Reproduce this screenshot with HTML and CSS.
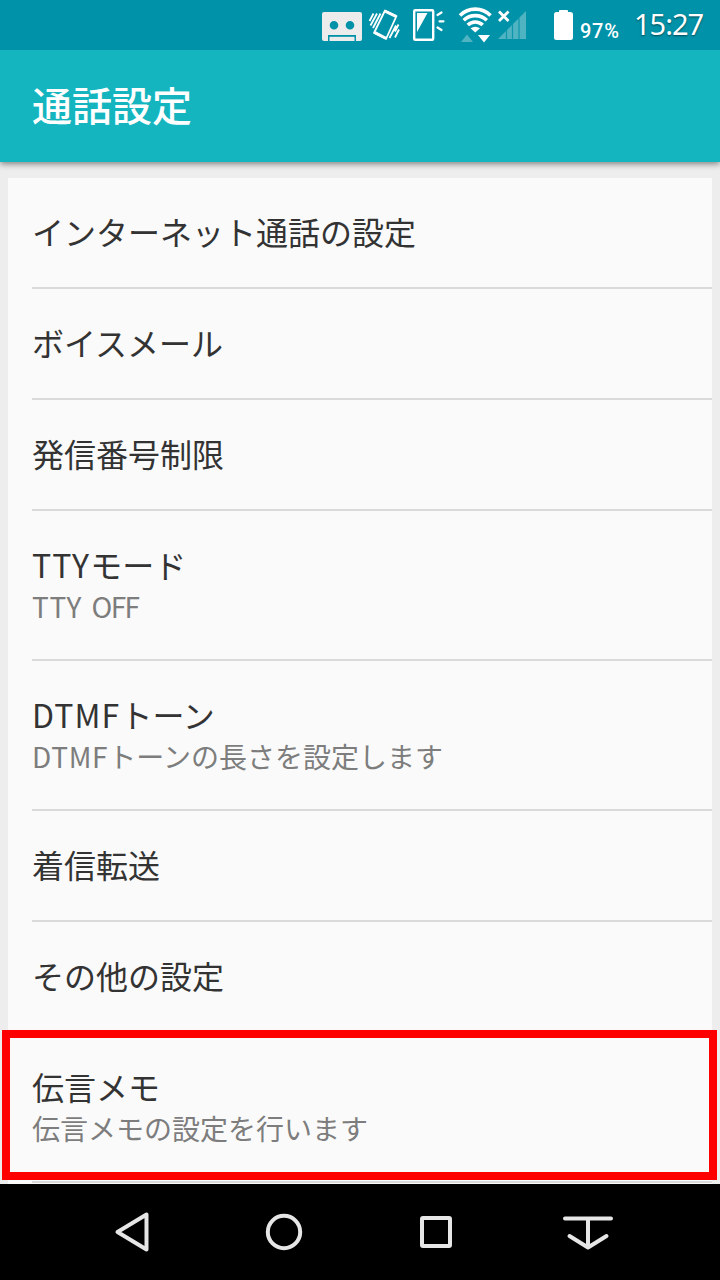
FILE: index.html
```html
<!DOCTYPE html>
<html lang="ja">
<head>
  <meta charset="UTF-8" />
  <meta name="viewport" content="width=device-width, initial-scale=1.0"/>
  <title>通話設定</title>
  <link rel="stylesheet" href="styles.css">
</head>
<body>
  <div class="status-bar">
    <svg class="status-icons" width="274" height="50" viewBox="310 0 274 50">
      <!-- answering memo -->
      <path fill="#ececec" fill-rule="evenodd" d="M324 12h36a2 2 0 0 1 2 2v25a2 2 0 0 1-2 2h-4v-6h-28v6h-4a2 2 0 0 1-2-2V14a2 2 0 0 1 2-2zM334 21a4.300 4.300 0 1 0 0 8.600a4.300 4.300 0 1 0 0-8.600zM350 21a4.300 4.300 0 1 0 0 8.600a4.300 4.300 0 1 0 0-8.600z"/>
      <path fill="#ececec" d="M329.500 36.800h25V41h-25z"/>
      <!-- vibrate -->
      <g fill="none" stroke="#fff">
        <path stroke-width="1.800" stroke-linejoin="round" d="M385 10.500L396.500 16 386 39 374 33z"/>
        <path stroke-width="2.600" d="M385.500 11.500l10.500 5M375 32.500l11 5.600"/>
        <path stroke-width="1.800" d="M373.500 13.500l-4 7.500M377 13.500l-6.500 12M380.500 13.500L373 28M398.500 24.500l-3.500 7M396 25.500l-6.500 12.500M399 29.500l-4 8"/>
      </g>
      <!-- screen light -->
      <g fill="none" stroke="#fff">
        <rect x="414.200" y="10.200" width="19" height="29.500" rx="1" stroke-width="2.400"/>
        <path stroke-width="2.200" stroke-linecap="round" d="M437.500 15l4-2.500M439.500 21.300h4M437.500 27.500l4 2.500"/>
        <path fill="#fff" stroke="none" d="M417 13h10.500L417 32z"/>
      </g>
      <!-- wifi -->
      <g fill="none" stroke="#fff" stroke-width="3.600">
        <path d="M460 15.500a21.500 21.500 0 0 1 30.500 0"/>
        <path d="M463.700 20.300a16.500 16.500 0 0 1 23.100 0"/>
        <path d="M467.800 25a10.600 10.600 0 0 1 14.900 0"/>
      </g>
      <path fill="#fff" d="M470.500 28.300q4.750-3 9.500 0l-4.750 4.300z"/>
      <path fill="#4fb3c2" d="M461 42l6-7.500 6 7.500z"/>
      <path fill="#fff" d="M478 35h12l-6 7.500z"/>
      <!-- signal -->
      <path fill="#4fb3c2" d="M498 39l28-28v28z"/>
      <path stroke="#0e96ab" stroke-width="1.200" d="M506.500 30v9M512.500 24v15M519 18v21"/>
      <path stroke="#fff" stroke-width="2.800" d="M499 11.500l9.500 9.500M508.500 11.500L499 21"/>
      <!-- battery -->
      <path fill="#fff" d="M559 12v-1q0-1 1-1h7q1 0 1 1v1h2.500q2.500 0 2.500 2.500v23q0 2.500-2.500 2.500h-14q-2.500 0-2.500-2.500v-23q0-2.500 2.500-2.500z"/>
    </svg>
    <span class="battery">97%</span>
    <span class="clock">15:27</span>
  </div>
  <div class="header">通話設定</div>
  <div class="main">
    <ul class="list">
      <li><div class="title">インターネット通話の設定</div></li>
      <li><div class="title">ボイスメール</div></li>
      <li><div class="title">発信番号制限</div></li>
      <li class="double">
        <div class="title"><span class="latin">TTY</span>モード</div>
        <div class="details"><span class="latin">TTY</span> <span class="value">OFF</span></div>
      </li>
      <li class="double">
        <div class="title"><span class="latin">DTMF</span>トーン</div>
        <div class="details"><span class="latin">DTMF</span>トーンの長さを設定します</div>
      </li>
      <li><div class="title">着信転送</div></li>
      <li><div class="title">その他の設定</div></li>
      <li class="double">
        <div class="title">伝言メモ</div>
        <div class="details">伝言メモの設定を行います</div>
        <div class="highlight"></div>
      </li>
    </ul>
  </div>
  <div class="nav">
    <svg viewBox="0 0 60 60"><path d="M44.500 12.500v35L15.500 30z"/></svg>
    <svg viewBox="0 0 60 60"><circle cx="30" cy="30" r="16.200"/></svg>
    <svg viewBox="0 0 60 60"><rect x="16" y="16" width="28" height="28" rx="1"/></svg>
    <svg viewBox="0 0 60 60"><path d="M7 16.500h46M30 17v28M11.500 34L30 45.500 48.500 34"/></svg>
  </div>
</body>
</html>
```

FILE: styles.css
```css
* { box-sizing: border-box; }
body {
  margin: 0;
  font-family: 'Noto Sans CJK JP', sans-serif;
  display: flex;
  flex-direction: column;
  height: 1280px;
  overflow: hidden;
  background: #ededed;
}

.status-bar {
  height: 50px;
  flex-shrink: 0;
  background: #0092a8;
  color: white;
  display: flex;
  align-items: center;
  justify-content: flex-end;
  padding-right: 16px;
}

.status-icons {
  margin-right: -4px;
}

.battery {
  width: 40px;
  font: 500 20px/50px Roboto, sans-serif;
  letter-spacing: 0.7px;
  padding-top: 12px;
  height: 62px;
}

.clock {
  width: 70px;
  margin-left: 14px;
  padding-bottom: 2px;
  font: 29px/48px 'Noto Sans', sans-serif;
  letter-spacing: -1px;
  text-shadow: 0 1px 2px rgba(0, 0, 0, 0.5);
}

.header {
  height: 112px;
  flex-shrink: 0;
  padding-left: 32px;
  font-size: 40px;
  font-weight: 500;
  line-height: 108px;
  color: white;
  background: #15b5c0;
  box-shadow: 0 2px 6px rgba(0, 0, 0, 0.45);
  clip-path: inset(0 0 -12px 0);
  z-index: 1;
}

.main {
  height: 1022px;
  flex-shrink: 0;
  padding: 16px 8px 0;
  overflow: hidden;
}

.list {
  list-style: none;
  margin: 0;
  padding: 0 0 0 24px;
  height: 1006px;
  background: #fafafa;
}

.list li {
  height: 111px;
  padding-bottom: 4px;
  border-bottom: 2px solid #dadada;
  display: flex;
  flex-direction: column;
  justify-content: center;
  position: relative;
}

.list li.double {
  height: 150px;
}

.title {
  font-size: 32px;
  line-height: 46px;
  color: #333;
  white-space: nowrap;
}

.details {
  font-size: 28px;
  line-height: 38px;
  color: #7d7d7d;
  white-space: nowrap;
}

.title .latin {
  letter-spacing: 1.1px;
}

.details .latin {
  letter-spacing: 0.7px;
}

.details .value {
  margin-left: 3px;
  letter-spacing: -1.5px;
}

.highlight {
  position: absolute;
  left: -30px;
  right: -5px;
  top: -3px;
  height: 150px;
  border: 8px solid #ff0000;
}

.nav {
  height: 96px;
  flex-shrink: 0;
  background: #000;
  display: flex;
  align-items: center;
  justify-content: center;
  gap: 92px;
}

.nav svg {
  width: 60px;
  height: 60px;
  fill: none;
  stroke: #e6e6e6;
  stroke-width: 4;
  stroke-linejoin: round;
  stroke-linecap: round;
}
```
